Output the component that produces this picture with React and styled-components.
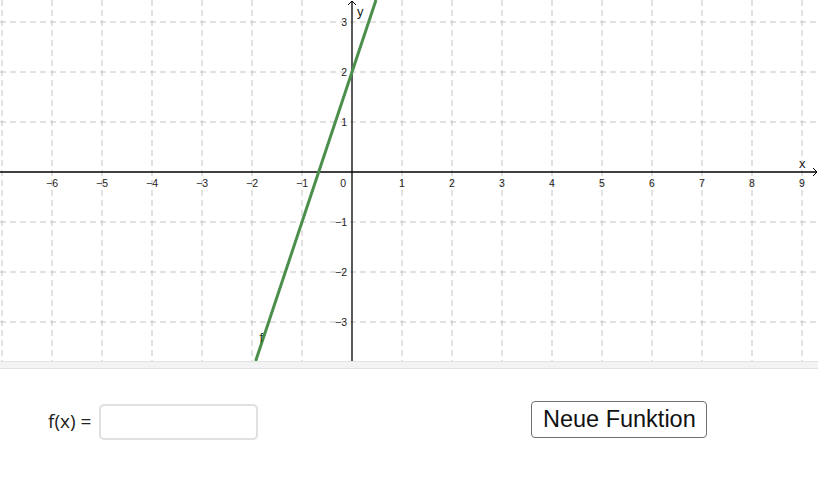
import React from "react";
import styled, { createGlobalStyle } from "styled-components";

const Global = createGlobalStyle`
  html, body { margin: 0; padding: 0; background: #fff; }
  body { font-family: "Liberation Sans", Arial, sans-serif; }
`;

const Page = styled.div`
  width: 820px;
  height: 500px;
  display: flex;
  flex-direction: column;
  background: #fff;
  overflow: hidden;
`;

const GraphPanel = styled.div`
  width: 818px;
  display: flex;
  flex-direction: column;
`;

const Canvas = styled.svg`
  display: block;
  width: 818px;
  height: 361px;
`;

const Strip = styled.div`
  height: 6px;
  background: #f3f3f3;
  border-top: 1px solid #e2e2e2;
  border-bottom: 1px solid #e2e2e2;
`;

const Controls = styled.div`
  display: flex;
  align-items: flex-start;
  padding: 32px 0 0 48px;
`;

const Label = styled.span`
  font-family: "Open Sans", "Liberation Sans", sans-serif;
  font-size: 19px;
  line-height: 26px;
  color: #222;
  margin-right: 8px;
  margin-top: 7px;
`;

const Input = styled.input`
  box-sizing: border-box;
  width: 159px;
  height: 36px;
  border: 2px solid #e0e0e0;
  border-radius: 5px;
  background: #fff;
  outline: none;
  margin-top: 3px;
`;

const Button = styled.button`
  box-sizing: border-box;
  margin-left: 273px;
  height: 37px;
  width: 176px;
  padding: 0;
  border: 1.5px solid #707070;
  border-radius: 4px;
  background: #fff;
  font-family: "Liberation Sans", Arial, sans-serif;
  font-size: 23.5px;
  color: #111;
  display: flex;
  align-items: center;
  justify-content: center;
`;

const OX = 352;
const OY = 172;
const U = 50;
const W = 818;
const H = 361;

const xs = [];
for (let k = -7; k <= 9; k++) xs.push(k);
const ys = [-3, -2, -1, 1, 2, 3];

const fmt = (n) => (n < 0 ? "\u2212" + Math.abs(n) : String(n));

function Graph() {
  const f = (x) => 3 * x + 2;
  const toPx = (x) => OX + x * U;
  const toPy = (y) => OY - y * U;
  const xTop = (OY / U - 2) / 3;
  const xBot = ((OY - H) / U - 2) / 3;
  return (
    <Canvas viewBox={`0 0 ${W} ${H}`}>
      <g stroke="#c4c4c4" strokeWidth="1" strokeDasharray="6,4" fill="none">
        {xs.map((k) =>
          k !== 0 ? (
            <line key={"v" + k} x1={toPx(k)} y1={0} x2={toPx(k)} y2={H} />
          ) : null
        )}
        {ys.map((k) => (
          <line key={"h" + k} x1={0} y1={toPy(k)} x2={W} y2={toPy(k)} />
        ))}
      </g>
      <g stroke="#000" strokeWidth="1.3" fill="none">
        <line x1={0} y1={OY} x2={W - 1} y2={OY} />
        <line x1={OX} y1={1} x2={OX} y2={H} />
        <polyline points={`${W - 5},${OY - 4} ${W - 1},${OY} ${W - 5},${OY + 4}`} strokeWidth="1" />
        <polyline points={`${OX - 4},${5} ${OX},${1} ${OX + 4},${5}`} strokeWidth="1" />
      </g>
      <g
        fontFamily="'Liberation Sans', Arial, sans-serif"
        fontSize="10.5"
        fill="#222"
      >
        {xs
          .filter((k) => k >= -6 && k !== 0)
          .map((k) => (
            <text key={"xl" + k} x={toPx(k)} y={OY + 15} textAnchor="middle">
              {fmt(k)}
            </text>
          ))}
        <text x={OX - 6} y={OY + 15} textAnchor="end">0</text>
        {ys.map((k) => (
          <text key={"yl" + k} x={OX - 5} y={toPy(k) + 4} textAnchor="end">
            {fmt(k)}
          </text>
        ))}
      </g>
      <text x={357} y={16} fontFamily="'Liberation Sans', Arial, sans-serif" fontSize="13" fill="#222">
        y
      </text>
      <text x={799} y={168} fontFamily="'Liberation Sans', Arial, sans-serif" fontSize="13" fill="#222">
        x
      </text>
      <line
        x1={toPx(xTop)}
        y1={toPy(f(xTop))}
        x2={toPx(xBot)}
        y2={toPy(f(xBot))}
        stroke="#4b8f4b"
        strokeWidth="3"
      />
      <text x={259.5} y={342} fontFamily="'Liberation Sans', Arial, sans-serif" fontSize="13" fill="#1c3d1c">
        f
      </text>
    </Canvas>
  );
}

export default function App() {
  return (
    <Page>
      <Global />
      <GraphPanel>
        <Graph />
        <Strip />
      </GraphPanel>
      <Controls>
        <Label>f(x) =</Label>
        <Input type="text" />
        <Button>Neue Funktion</Button>
      </Controls>
    </Page>
  );
}
